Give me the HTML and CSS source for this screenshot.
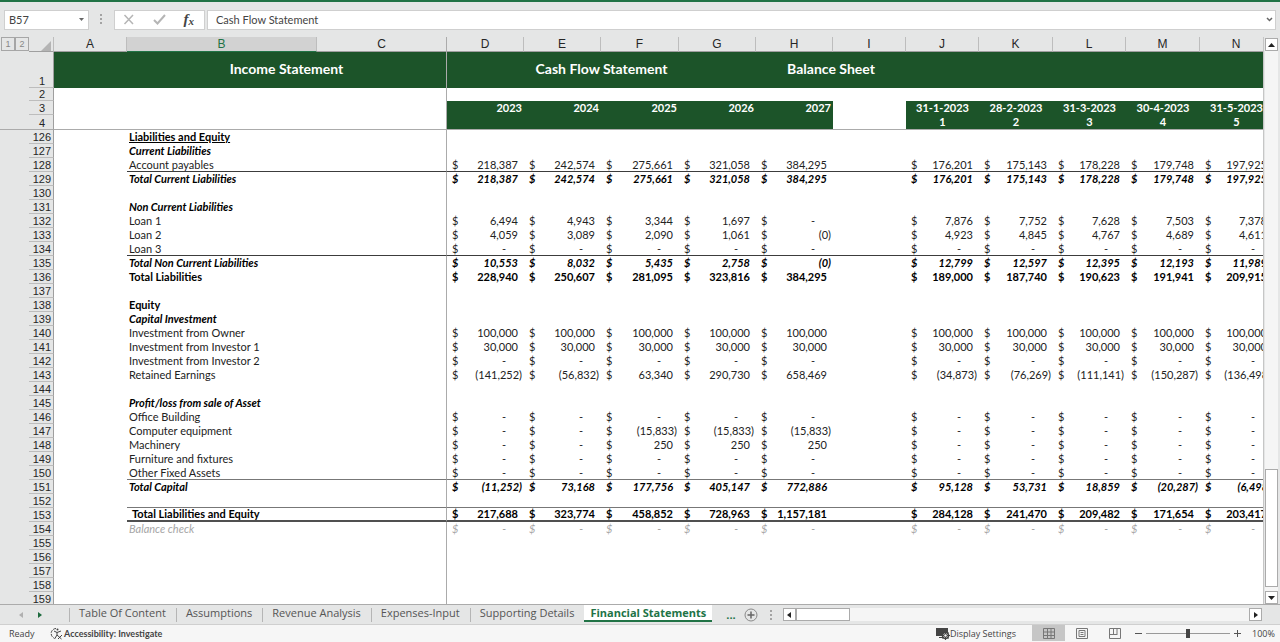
FILE: index.html
```html
<!DOCTYPE html>
<html lang="en">
<head>
<meta charset="utf-8">
<title>Financial Statements</title>
<link rel="stylesheet" href="styles.css">
</head>
<body>
<div class="app">
  <header class="formula-bar">
    <div class="name-box">
      <input class="name-input" type="text" value="B57" aria-label="Name box">
      <button class="plain" type="button" aria-label="Open name list"><svg width="5" height="3" viewBox="0 0 5 3"><path d="M0 0h5L2.500 3z" fill="#666"/></svg></button>
    </div>
    <svg class="grip" width="3" height="11" viewBox="0 0 3 11" fill="#a3a3a3"><path d="M0 0h2v2H0zM0 4h2v2H0zM0 8h2v2H0z"/></svg>
    <div class="edit-buttons">
      <button class="plain" type="button" aria-label="Cancel"><svg width="12" height="11" viewBox="0 0 12 11" fill="none" stroke="#b5b5b5" stroke-width="1.500"><path d="M1.500 1l8.500 9M10 1L1.500 10"/></svg></button>
      <button class="plain" type="button" aria-label="Enter"><svg width="13" height="11" viewBox="0 0 13 11" fill="none" stroke="#b5b5b5" stroke-width="2"><path d="M1 6l3.500 3.500L12 1"/></svg></button>
      <button class="plain fx" type="button" aria-label="Insert function">f<small>x</small></button>
    </div>
    <div class="formula-box">
      <input class="formula-input" type="text" value="Cash Flow Statement" aria-label="Formula bar">
      <button class="plain" type="button" aria-label="Expand formula bar"><svg width="7" height="5" viewBox="0 0 7 5" fill="none" stroke="#666" stroke-width="1.500"><path d="M1 1l2.500 2.500L6 1"/></svg></button>
    </div>
  </header>

  <main class="workspace">
    <div class="sheet">
      <table class="grid">
        <colgroup>
          <col class="c-gutter"><col class="c-num"><col class="c-a"><col class="c-b"><col class="c-c">
          <col class="c-year"><col class="c-year"><col class="c-year-b"><col class="c-year"><col class="c-year">
          <col class="c-a"><col class="c-a"><col class="c-month-b"><col class="c-a"><col class="c-month-b"><col class="c-a">
        </colgroup>
        <thead>
          <tr class="letters">
            <td class="gutter"><div class="levels"><button type="button">1</button><button type="button">2</button></div></td>
            <td class="corner"><svg width="10" height="10" viewBox="0 0 10 10"><path d="M10 0v10H0z" fill="#b4b4b4"/></svg></td>
            <th scope="col">A</th><th scope="col" class="selected">B</th><th scope="col" class="split">C</th>
            <th scope="col">D</th><th scope="col">E</th><th scope="col">F</th><th scope="col">G</th><th scope="col">H</th><th scope="col">I</th>
            <th scope="col">J</th><th scope="col">K</th><th scope="col">L</th><th scope="col">M</th><th scope="col">N</th>
          </tr>
          <tr class="banner">
            <td class="gutter"></td><th class="num" scope="row">1</th>
            <td></td><td colspan="2" class="split">Income Statement</td><td colspan="4">Cash Flow Statement</td><td colspan="2">Balance Sheet</td><td colspan="5"></td>
          </tr>
          <tr class="spacer">
            <td class="gutter"></td><th class="num" scope="row">2</th><td></td><td></td><td class="split"></td><td colspan="11"></td>
          </tr>
          <tr class="dates">
            <td class="gutter"></td><th class="num" scope="row">3</th><td></td><td></td><td class="split"></td>
            <td class="year">2023</td><td class="year">2024</td><td class="year">2025</td><td class="year">2026</td><td class="year">2027</td><td></td>
            <td class="month">31-1-2023</td><td class="month">28-2-2023</td><td class="month">31-3-2023</td><td class="month">30-4-2023</td><td class="month">31-5-2023</td>
          </tr>
          <tr class="dates frozen">
            <td class="gutter"></td><th class="num" scope="row">4</th><td></td><td></td><td class="split"></td>
            <td class="year"></td><td class="year"></td><td class="year"></td><td class="year"></td><td class="year"></td><td></td>
            <td class="month">1</td><td class="month">2</td><td class="month">3</td><td class="month">4</td><td class="month">5</td>
          </tr>
        </thead>
        <tbody id="rows"></tbody>
      </table>
    </div>
    <div class="v-scroll">
      <button class="arrow" type="button" aria-label="Scroll up"><svg width="7" height="4" viewBox="0 0 7 4"><path d="M3.500 0L7 4H0z" fill="#222"/></svg></button>
      <div class="v-track"><div class="v-thumb"></div></div>
      <button class="arrow" type="button" aria-label="Scroll down"><svg width="7" height="4" viewBox="0 0 7 4"><path d="M0 0h7L3.500 4z" fill="#222"/></svg></button>
    </div>
  </main>

  <nav class="tab-bar" aria-label="Sheets">
    <div class="tab-nav">
      <button class="plain" type="button" aria-label="Previous sheet"><svg width="4" height="6" viewBox="0 0 4 6"><path d="M4 0v6L0 3z" fill="#b0b0b0"/></svg></button>
      <button class="plain" type="button" aria-label="Next sheet"><svg width="4" height="6" viewBox="0 0 4 6"><path d="M0 0v6l4-3z" fill="#1e6b3e"/></svg></button>
    </div>
    <button class="tab" type="button">Table Of Content</button>
    <button class="tab" type="button">Assumptions</button>
    <button class="tab" type="button">Revenue Analysis</button>
    <button class="tab" type="button">Expenses-Input</button>
    <button class="tab" type="button">Supporting Details</button>
    <button class="tab active" type="button">Financial Statements</button>
    <button class="plain more" type="button" aria-label="More sheets">...</button>
    <button class="plain" type="button" aria-label="New sheet"><svg width="14" height="14" viewBox="0 0 14 14" fill="none" stroke="#8a8a8a"><circle cx="7" cy="7" r="6"/><path d="M7 3.500v7M3.500 7h7" stroke="#666" stroke-width="1.500"/></svg></button>
    <svg class="tab-grip" width="3" height="10" viewBox="0 0 3 10" fill="#a3a3a3"><path d="M0 0h2v2H0zM0 4h2v2H0zM0 8h2v2H0z"/></svg>
    <div class="h-scroll">
      <button class="arrow" type="button" aria-label="Scroll left"><svg width="4" height="6" viewBox="0 0 4 6"><path d="M4 0v6L0 3z" fill="#222"/></svg></button>
      <div class="h-track"><div class="h-thumb"></div></div>
      <button class="arrow" type="button" aria-label="Scroll right"><svg width="4" height="6" viewBox="0 0 4 6"><path d="M0 0v6l4-3z" fill="#222"/></svg></button>
    </div>
  </nav>

  <footer class="status">
    <span class="ready">Ready</span>
    <button class="plain access" type="button"><svg width="13" height="13" viewBox="0 0 13 13" fill="none" stroke="#444"><path d="M6 1.500A5 5 0 0 0 4 11" stroke-dasharray="3 1"/><path d="M4 4l3 1.500L11 4M7 5.500V8l-2.500 4M7 8l4.500 4M8 12l4-4"/><circle cx="7.500" cy="2.500" r="1" fill="#444" stroke="none"/></svg>Accessibility: Investigate</button>
    <div class="status-right">
      <button class="plain display" type="button"><svg width="14" height="13" viewBox="0 0 14 13"><path d="M0 1h12v8H0zM3 10h4v1H3z" fill="#444"/><circle cx="9.500" cy="8.500" r="3" fill="#f6f6f6" stroke="#444" stroke-width="1.500"/><path d="M9.500 4v9M5 8.500h9M6.500 5.500l6 6M12.500 5.500l-6 6" stroke="#444"/><circle cx="9.500" cy="8.500" r="1.200" fill="#f6f6f6"/></svg>Display Settings</button>
      <button class="plain view on" type="button" aria-label="Normal view"><svg width="12" height="11" viewBox="0 0 12 11" fill="none" stroke="#777"><path d="M.5.500h11v10H.500zM4.500 0v11M8 0v11M0 4h12M0 7.500h12"/></svg></button>
      <button class="plain view" type="button" aria-label="Page layout view"><svg width="12" height="11" viewBox="0 0 12 11" fill="none" stroke="#777"><path d="M.5.500h11v10H.500zM3 2.500h6v6H3zM4.500 4.500h3M4.500 6.500h3"/></svg></button>
      <button class="plain view" type="button" aria-label="Page break view"><svg width="12" height="11" viewBox="0 0 12 11" fill="none" stroke="#777"><path d="M.5.500h11v10H.500zM4.500 0v6M8 0v6M0 6.500h8.500"/></svg></button>
      <button class="plain zoom-step" type="button" aria-label="Zoom out"><svg width="7" height="7" viewBox="0 0 7 7"><path d="M0 3.500h7" stroke="#555"/></svg></button>
      <input class="zoom" type="range" min="0" max="100" value="50" aria-label="Zoom">
      <button class="plain zoom-step" type="button" aria-label="Zoom in"><svg width="7" height="7" viewBox="0 0 7 7"><path d="M0 3.500h7M3.500 0v7" stroke="#555"/></svg></button>
      <span class="percent">100%</span>
    </div>
  </footer>
</div>
<script src="rows.js"></script>
</body>
</html>
```

FILE: rows.js
```js
// Each entry: row style, label, then ten amounts (five years, five months).
const zeros = "- - - - - - - - - -";
const rows = [
  ["heading", "Liabilities and Equity"],
  ["total", "Current Liabilities"],
  ["ruled", "Account payables", "218,387 242,574 275,661 321,058 384,295 176,201 175,143 178,228 179,748 197,925"],
  ["total", "Total Current Liabilities", "218,387 242,574 275,661 321,058 384,295 176,201 175,143 178,228 179,748 197,925"],
  ["", ""],
  ["total", "Non Current Liabilities"],
  ["", "Loan 1", "6,494 4,943 3,344 1,697 - 7,876 7,752 7,628 7,503 7,378"],
  ["", "Loan 2", "4,059 3,089 2,090 1,061 (0) 4,923 4,845 4,767 4,689 4,611"],
  ["ruled", "Loan 3", zeros],
  ["total", "Total Non Current Liabilities", "10,553 8,032 5,435 2,758 (0) 12,799 12,597 12,395 12,193 11,989"],
  ["strong", "Total Liabilities", "228,940 250,607 281,095 323,816 384,295 189,000 187,740 190,623 191,941 209,915"],
  ["", ""],
  ["strong", "Equity"],
  ["total", "Capital Investment"],
  ["", "Investment from Owner", "100,000 100,000 100,000 100,000 100,000 100,000 100,000 100,000 100,000 100,000"],
  ["", "Investment from Investor 1", "30,000 30,000 30,000 30,000 30,000 30,000 30,000 30,000 30,000 30,000"],
  ["", "Investment from Investor 2", zeros],
  ["", "Retained Earnings", "(141,252) (56,832) 63,340 290,730 658,469 (34,873) (76,269) (111,141) (150,287) (136,498)"],
  ["", ""],
  ["total", "Profit/loss from sale of Asset"],
  ["", "Office Building", zeros],
  ["", "Computer equipment", "- - (15,833) (15,833) (15,833) - - - - -"],
  ["", "Machinery", "- - 250 250 250 - - - - -"],
  ["", "Furniture and fixtures", zeros],
  ["ruled light", "Other Fixed Assets", zeros],
  ["total", "Total Capital", "(11,252) 73,168 177,756 405,147 772,886 95,128 53,731 18,859 (20,287) (6,498)"],
  ["ruled light", ""],
  ["strong grand", "Total Liabilities and Equity", "217,688 323,774 458,852 728,963 1,157,181 284,128 241,470 209,482 171,654 203,417"],
  ["check", "Balance check", zeros],
  ["", ""], ["", ""], ["", ""], ["", ""], ["", ""]
];

function amountCell(value) {
  if (!value) return "<td></td>";
  const kind = value === "-" ? "dash" : value[0] === "(" ? "negative" : "positive";
  return `<td><div class="amount ${kind}"><span>$</span><span>${value}</span></div></td>`;
}

document.getElementById("rows").innerHTML = rows.map(([style, label, list], i) => {
  const v = list ? list.split(" ") : [];
  const cells = [0, 1, 2, 3, 4, null, 5, 6, 7, 8, 9].map(k => amountCell(k === null ? "" : v[k])).join("");
  return `<tr class="${style}"><td class="gutter"></td><th class="num" scope="row">${126 + i}</th>` +
    `<td class="col-a"></td><td class="label"><span>${label}</span></td><td class="split"></td>${cells}</tr>`;
}).join("");
```

FILE: styles.css
```css
* { box-sizing: border-box; }

body {
  margin: 0;
  color: #222;
  background: #e5e6e6;
  font: 11px "Open Sans", "Noto Sans", sans-serif;
}

button, input { font: inherit; color: inherit; }

.app {
  display: flex;
  flex-direction: column;
  height: 100vh;
  overflow: hidden;
  border-top: 2px solid #217346;
}

.plain {
  display: flex;
  align-items: center;
  justify-content: center;
  padding: 0;
  border: 0;
  background: none;
}

/* Formula bar */
.formula-bar {
  display: flex;
  flex: none;
  align-items: center;
  height: 35px;
  padding: 0 4px;
}

.name-box, .edit-buttons, .formula-box {
  display: flex;
  align-items: center;
  height: 20px;
  background: #fff;
  border: 1px solid #cfcfcf;
}

.name-box { width: 85px; padding-right: 4px; }

.name-input, .formula-input {
  flex: 1;
  min-width: 0;
  padding: 0 4px;
  border: 0;
  outline: 0;
  background: none;
  color: #444;
  font: 11px Lato, sans-serif;
}

.formula-input { padding: 0 8px; }
.grip { margin: 0 11px; }

.edit-buttons {
  justify-content: space-between;
  width: 91px;
  padding: 0 10px 0 8px;
}

.fx { color: #444; font: italic bold 15px "Liberation Serif", serif; }
.fx small { font-size: 11px; padding-top: 3px; }
.formula-box { flex: 1; margin-left: 2px; padding-right: 2px; }

/* Sheet */
.workspace { display: flex; flex: 1; min-height: 0; }

.sheet {
  flex: 1;
  min-width: 0;
  overflow: hidden;
  background: #fff;
}

.grid {
  width: 1272px;
  table-layout: fixed;
  border-collapse: separate;
  border-spacing: 0;
  font: 11px/13px Lato, sans-serif;
}

.c-gutter { width: 29px; }
.c-num { width: 25px; }
.c-a { width: 73px; }
.c-b { width: 190px; }
.c-c { width: 130px; }
.c-year { width: 77px; }
.c-year-b { width: 78px; }
.c-month-b { width: 74px; }

.grid td, .grid th {
  height: 14px;
  padding: 0;
  white-space: nowrap;
}

.grid td { vertical-align: top; }

.grid .gutter, .grid .corner, .letters th { background: #e5e6e6; }
.grid .split { border-right: 1px solid #ababab; }

.grid .num {
  background: #e5e6e6;
  border-right: 1px solid #9f9f9f;
  border-bottom: 1px solid #bdbdbd;
  color: #262626;
  font: 11px/12px "Liberation Sans", sans-serif;
  padding-right: 2px;
  text-align: right;
  vertical-align: bottom;
}

.grid thead .num { padding-right: 8px; }

.letters td, .letters th {
  height: 15px;
  border-bottom: 1px solid #9f9f9f;
}

.letters th {
  border-right: 1px solid #bdbdbd;
  font: 12px/14px "Liberation Sans", sans-serif;
  color: #262626;
}

.letters .selected {
  background: #d2d2d2;
  border-bottom-color: #217346;
  color: #217346;
}

.grid .corner {
  border-right: 1px solid #bdbdbd;
  padding-right: 2px;
  text-align: right;
  vertical-align: bottom;
}

.corner svg { display: block; margin-left: auto; }
.grid .letters .gutter { border-bottom: 0; }
.levels { display: flex; padding-left: 1px; }

.levels button {
  flex: 1;
  height: 14px;
  padding: 0;
  border: 1px solid #a6a6a6;
  background: none;
  color: #888;
  font: 9px/11px "Liberation Sans", sans-serif;
}

.grid .banner td {
  height: 36px;
  color: #fff;
  font-size: 14px;
  font-weight: bold;
  line-height: 34px;
  text-align: center;
}

.banner td:not(.gutter) { background: #1c5429; }
.grid .spacer td, .grid .spacer th { height: 13px; }
.grid .frozen td, .grid .frozen th { height: 15px; border-bottom: 1px solid #ababab; }

.dates .year, .dates .month {
  background: #1c5429;
  color: #fff;
  font-weight: bold;
}

.dates .year { padding-right: 2px; text-align: right; }
.dates .month { text-align: center; }

.grid .label { padding-left: 2px; }

.amount {
  display: flex;
  justify-content: space-between;
  padding-left: 5px;
}

.positive { padding-right: 6px; }
.negative { padding-right: 2px; }
.dash { padding-right: 18px; }

.heading, .total, .strong { font-weight: bold; color: #000; }
.heading .label { text-decoration: underline; }
.total { font-style: italic; }
.check { font-style: italic; color: #a6a6a6; }

.ruled td:not(.gutter):not(.col-a) { border-bottom: 1px solid #3c3c3c; }
.light td:not(.gutter):not(.col-a) { border-bottom-color: #777; }
.grand td:not(.gutter):not(.col-a) { border-bottom: 2px solid #505050; line-height: 12px; }
.grid .grand .label { padding-left: 5px; }

/* Scroll bars */
.v-scroll {
  display: flex;
  flex-direction: column;
  width: 17px;
  padding: 1px 2px 0 1px;
  border-left: 1px solid #c6c6c6;
}

.arrow {
  display: flex;
  flex: none;
  align-items: center;
  justify-content: center;
  width: 13px;
  height: 13px;
  padding: 0;
  border: 1px solid #ababab;
  background: #fff;
}

.v-track {
  display: flex;
  flex: 1;
  flex-direction: column;
  justify-content: flex-end;
  padding-bottom: 4px;
  background: #f5f5f5;
}

.v-thumb { height: 22%; background: #fff; border: 1px solid #ababab; }

/* Sheet tabs */
.tab-bar {
  display: flex;
  flex: none;
  align-items: center;
  height: 20px;
  border-top: 1px solid #ababab;
  color: #555;
}

.tab-nav {
  display: flex;
  align-items: center;
  gap: 15px;
  width: 69px;
  padding-left: 19px;
}

.tab {
  height: 14px;
  padding: 0 10px 4px 9px;
  border: 0;
  border-left: 1px solid #b5b5b5;
  background: none;
  line-height: 10px;
  white-space: nowrap;
}

.tab.active {
  align-self: flex-start;
  height: 17px;
  padding: 0 6px;
  border-left: 0;
  border-bottom: 2px solid #217346;
  background: #fff;
  color: #217346;
  font-weight: bold;
}

.more { margin: 0 8px 0 14px; color: #217346; font-weight: bold; }
.tab-grip { margin: 0 10px 0 12px; }

.h-scroll {
  display: flex;
  flex: 1;
  padding-right: 18px;
}

.h-track { flex: 1; background: #f5f5f5; }
.h-thumb { width: 54px; height: 13px; background: #fff; border: 1px solid #ababab; }

/* Status bar */
.status {
  display: flex;
  flex: none;
  align-items: center;
  height: 18px;
  padding: 0 0 1px 9px;
  background: #f6f6f6;
  border-top: 1px solid #cfcfcf;
  color: #444;
  font-size: 9px;
}

.ready { width: 41px; }
.access { gap: 1px; font: bold 9px Lato, sans-serif; }
.status-right { display: flex; align-items: center; margin-left: auto; height: 100%; }
.display { margin-right: 16px; }
.view { width: 33px; height: 100%; }
.view.on { background: #c6c6c6; }
.zoom-step { margin: 0 4px; }

.zoom {
  width: 84px;
  height: 12px;
  margin: 0;
  appearance: none;
  background: linear-gradient(#999, #999) center / 100% 1px no-repeat;
}

.zoom::-webkit-slider-thumb {
  appearance: none;
  width: 4px;
  height: 9px;
  background: #444;
}

.percent { width: 35px; padding-left: 7px; }
```
